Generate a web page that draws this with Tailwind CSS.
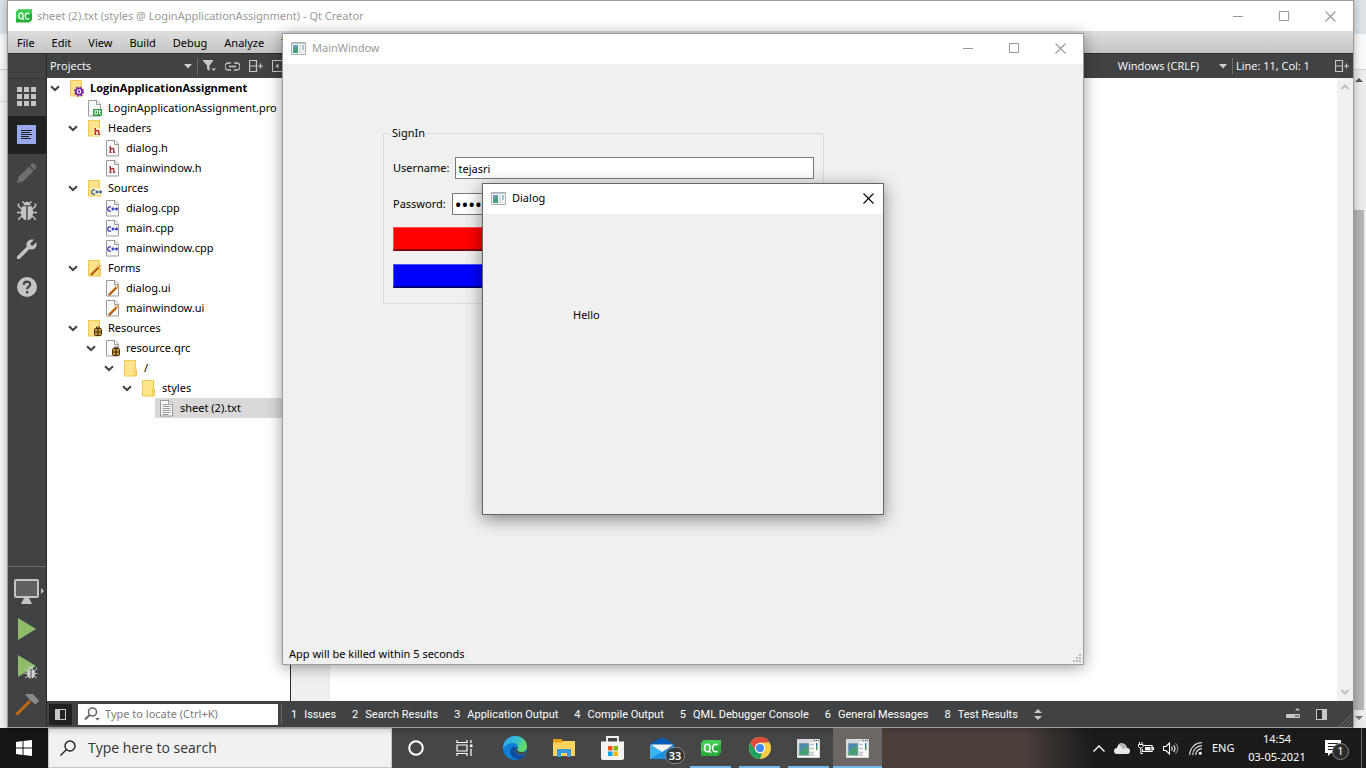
<!DOCTYPE html>
<html lang="en">
<head>
<meta charset="utf-8">
<title>Qt Creator desktop</title>
<script src="https://cdn.jsdelivr.net/npm/@tailwindcss/browser@4"></script>
</head>
<body class="flex h-screen flex-col overflow-hidden bg-[#f1f1f1] font-['Noto_Sans','Open_Sans',sans-serif] text-[11px] leading-4 text-black">

<!-- Shared icon shapes -->
<svg class="hidden" aria-hidden="true">
  <symbol id="qc" viewBox="0 0 20 16"><path d="M3 0h17v13l-3 3H0V3z" fill="#28ad3c"/><path d="M3 0h17v5L0 12V3z" fill="#41cd52"/><path d="M8.800 11.200 10 13M6.300 4.200c-2 0-2.700 1.500-2.700 3.800s.7 3.700 2.700 3.700S9 10.200 9 8s-.7-3.800-2.700-3.800zM16.500 4.800c-3.200-1.400-4.900.3-4.900 3.200s1.700 4.700 4.900 3.300" fill="none" stroke="#fff" stroke-width="1.500"/></symbol>
  <symbol id="down" viewBox="0 0 10 7"><path d="M1 1.200 5 5l4-3.800" fill="none" stroke="#444" stroke-width="2"/></symbol>
  <symbol id="folder" viewBox="0 0 15 17"><path d="M.5.500h11v15.500H.5z" fill="#ffe38b" stroke="#eec84f"/><path d="M10.500 9.500h2V16h-2z" fill="#ffe38b" stroke="#eec84f"/></symbol>
  <symbol id="page" viewBox="0 0 15 17"><path d="M.5.500H9l3.500 3.500v12H.5z" fill="#fafafa" stroke="#9a9a9a"/><path d="M8.500.500V4.500h4" fill="#eee" stroke="#9a9a9a"/></symbol>
  <symbol id="hglyph" viewBox="0 0 7 8"><path d="M1 0v8M1 4q4-2.500 4 .5V8M0 .5h1M0 7.500h2.500M4 7.500h2.500" fill="none" stroke="currentColor" stroke-width="1.600"/></symbol>
  <symbol id="cpp" viewBox="0 0 11 6"><path d="M4 1.200Q.8-.2.800 3T4 4.800M4.500 3h3M6 1.500v3M8 3h3M9.500 1.500v3" fill="none" stroke="currentColor" stroke-width="1.300"/></symbol>
  <symbol id="wand" viewBox="0 0 11 11"><path d="M.8 10.200 8 3" stroke="#b9600c" stroke-width="2.200"/><path d="m7.500 3.500 2.500-2.500M6.500 1.500l.5.500M9.500 4.500l.5.500" stroke="#e0a050" stroke-width="1.400"/></symbol>
  <symbol id="barrel" viewBox="0 0 8 10"><path d="M2.500 2.500V1h3v1.500" fill="none" stroke="#4a2c18"/><rect x=".5" y="2.500" width="7" height="7" rx="1" fill="#c79b2c" stroke="#4a2c18"/><path d="M0 6h8M4 2.500v7" stroke="#4a2c18" stroke-width="1.200"/></symbol>
  <symbol id="bug" viewBox="0 0 20 20"><path d="M6.500 4.300a3.500 3.500 0 0 1 7 0z"/><path d="M9.300 5.200v14C5.500 18.700 4 15.500 4 11c0-2.500.4-4.500 1.500-5.800zM10.700 5.200v14c3.800-.5 5.300-3.700 5.300-8.200 0-2.500-.4-4.500-1.500-5.800z"/><path d="M4.500 8 1.500 5V2.500M15.500 8l3-3V2.500M4.500 11.500H0M15.500 11.500H20M5 15l-3 2.500V19M15 15l3 2.500V19M7 2 5.500.500M13 2l1.500-1.500" fill="none" stroke="currentColor" stroke-width="1.500"/></symbol>
  <symbol id="app" viewBox="0 0 15 13"><path d="M.5.500h14v12H.5z" fill="#f1f3f4" stroke="#a9b0b5"/><path d="M1 1h13v1H1z" fill="#c2c9ce"/><path d="M2 3h5v8H2z" fill="#6c9abf"/><path d="m2 11V8l5-4v7z" fill="#48a178"/><path d="M8 3h2v8H8z" fill="#dde0e2"/><path d="M11 3h2v5h-2z" fill="#a3c6cf"/></symbol>
  <symbol id="appbig" viewBox="0 0 23 19"><path d="M.5.500h22v18H.5z" fill="#fafafa" stroke="#d7dadc"/><path d="M1 1h21v2H1z" fill="#d6d9dc"/><path d="M17 1.500h1M19 1.500h1M21 1.500h1" stroke="#555"/><path d="M2 4h10v12.500H2z" fill="#5287ad" stroke="#a9b6bd"/><path d="M2.500 16c1-5 4-8 9-9v9z" fill="#47a06f"/><path d="M13 5.500h4M13 9.500h4M13 13.500h4M13 16h4" stroke="#bdc1c4" stroke-width="1.600"/><path d="M19 4h1.500v3H19z" fill="#3571b4"/><path d="M19 7h1.500v4H19z" fill="#3b9a68"/></symbol>
  <symbol id="split" viewBox="0 0 15 12"><path d="M.5.500h7v11h-7zM.5 6h7M9 6h5M11.500 3.500v5" fill="none" stroke="#c8c8c8" stroke-width="1.200"/></symbol>
  <symbol id="close" viewBox="0 0 11 11"><path d="m.5.500 10 10m0-10-10 10" stroke="currentColor" stroke-width="1.100"/></symbol>
  <symbol id="lens" viewBox="0 0 16 16"><circle cx="10" cy="6" r="5" fill="none" stroke="currentColor" stroke-width="1.400"/><path d="M6.500 9.500.5 15.500" stroke="currentColor" stroke-width="1.400"/></symbol>
</svg>

<main class="relative min-h-0 flex-1">
  <!-- Browser behind everything -->
  <div class="absolute inset-0 flex flex-col bg-[#f5f5f5]">
    <div class="h-[34px] bg-[#dee3e7]"></div>
    <div class="h-9 border-b border-[#d0d3d7] bg-[#fafafa]"></div>
    <div class="flex min-h-0 flex-1">
      <div class="flex-1"><div class="h-8 border-b border-[#dcdcdc]"></div></div>
      <div class="flex w-4 flex-col items-end bg-[#ececec] pr-[2px]">
        <svg class="mt-2 h-1 w-[9px]" viewBox="0 0 9 4"><path d="M0 4 4 0l4 4z" fill="#555"/></svg>
        <div class="mt-32 w-3 flex-1 bg-[#b5b5b5]"></div>
        <svg class="mt-[6px] mb-2 h-1 w-[9px]" viewBox="0 0 9 4"><path d="M0 0h8L4 4z" fill="#777"/></svg>
      </div>
    </div>
  </div>

  <!-- Qt Creator window -->
  <section class="absolute top-0 right-3 bottom-0 left-[7px] flex flex-col border border-[#9b9b9b] bg-white shadow-[0_0_8px_rgba(0,0,0,0.3)]">
    <header class="flex h-[30px] shrink-0 items-center pl-2 text-[#999]">
      <svg class="mr-1 h-[14px] w-4"><use href="#qc"/></svg>
      <h1 class="flex-1 pl-px">sheet (2).txt (styles @ LoginApplicationAssignment) - Qt Creator</h1>
      <button aria-label="Minimize" class="flex h-full w-[46px] items-center justify-center"><svg class="h-[11px] w-[11px]" viewBox="0 0 11 11"><path d="M0 5.500h10" stroke="#999"/></svg></button>
      <button aria-label="Maximize" class="flex h-full w-[46px] items-center justify-center"><svg class="h-[11px] w-[11px]" viewBox="0 0 11 11"><path d="M.5.500h9v9h-9z" fill="none" stroke="#999"/></svg></button>
      <button aria-label="Close" class="flex h-full w-[46px] items-center justify-center"><svg class="h-[11px] w-[11px]"><use href="#close"/></svg></button>
    </header>
    <nav class="flex h-[22px] shrink-0 items-center gap-[17px] bg-linear-to-b from-[#dedede] to-[#c5c5c5] pt-px pl-[9px]">
      <button>File</button><button>Edit</button><button>View</button><button>Build</button><button>Debug</button><button>Analyze</button><button>Tools</button>
    </nav>

    <div class="flex min-h-0 flex-1 bg-[#404244]">
      <!-- Mode selector -->
      <aside class="flex w-[39px] shrink-0 flex-col border-t border-r border-[#2b2c2d] pt-6 text-[#c3c4c5]">
        <button aria-label="Welcome" class="flex h-[38px] items-center justify-center border-t border-[#333536] pr-[2px] pb-[2px]"><svg class="h-[19px] w-[19px]" viewBox="0 0 19 19" fill="#c3c4c5"><path d="M0 0h5v5H0zM7 0h5v5H7zM14 0h5v5h-5zM0 7h5v5H0zM7 7h5v5H7zM14 7h5v5h-5zM0 14h5v5H0zM7 14h5v5H7zM14 14h5v5h-5z"/></svg></button>
        <button aria-label="Edit" class="flex h-[38px] items-center justify-center bg-[#202222] pr-[2px] pb-[2px]"><svg class="h-[19px] w-[19px]" viewBox="0 0 19 19"><path d="M0 0h19v19H0z" fill="#97a8ed"/><path d="M4 5.500h11M4 7.500h9M4 9.500h11M4 11.500h8M4 13.500h10" stroke="#202222"/></svg></button>
        <button aria-label="Design" class="flex h-[38px] items-center justify-center pr-px"><svg class="h-5 w-5" viewBox="0 0 20 20" fill="#6d6e6f"><path d="m0 20 1.500-6L12 3.500 16.500 8 6 18.500zM13 2.500 15 .5Q16 0 17 1l2 2q1 1 .3 2l-2 2z"/></svg></button>
        <button aria-label="Debug" class="flex h-[38px] items-center justify-center pr-px"><svg class="h-5 w-5" fill="currentColor"><use href="#bug"/></svg></button>
        <button aria-label="Projects" class="flex h-[38px] items-center justify-center pr-px"><svg class="h-5 w-5" viewBox="0 0 20 20"><path d="M1.500 18.500 11 9" stroke="#c3c4c5" stroke-width="3.600" stroke-linecap="round"/><path d="M17 .8 13.500 4.300l.4 2 2 .4L19.300 3.200c1.500 4.500-2.300 8.300-6.500 7L9.700 7.200C8.500 3 12.500-.7 17 .8z" fill="#c3c4c5"/></svg></button>
        <button aria-label="Help" class="flex h-[38px] items-center justify-center"><svg class="h-5 w-5" viewBox="0 0 20 20"><circle cx="10" cy="10" r="10" fill="#c3c4c5"/><path d="M6.800 7.800c0-4.300 6.600-4 6.400-.3-.1 2.200-3 2.200-3.100 4.700" fill="none" stroke="#404244" stroke-width="2.200"/><path d="M9 14h2.300v2.300H9z" fill="#404244"/></svg></button>
        <div class="flex-1"></div>
        <div class="border-t border-[#696a6b] pt-[6px] pb-[3px]">
          <button aria-label="Kit selector" class="flex h-[37px] w-full items-center justify-center pl-1"><svg class="h-[25px] w-[30px]" viewBox="0 0 30 25"><rect x="1" y="1" width="23" height="17" rx="1" fill="#606162" stroke="#c3c4c5" stroke-width="2"/><path d="M10 19h5l3 6H7z" fill="#c3c4c5"/><path d="m27 9 3 3-3 3z" fill="#c3c4c5"/></svg></button>
          <button aria-label="Run" class="flex h-[38px] w-full items-center justify-center"><svg class="h-[22px] w-[18px]" viewBox="0 0 18 22"><path d="m0 0 18 11L0 22z" fill="#8fbc6b"/></svg></button>
          <button aria-label="Start debugging" class="flex h-[38px] w-full items-center justify-center pl-px"><svg class="h-6 w-5" viewBox="0 0 20 24"><path d="m0 0 18 11L0 22z" fill="#8fbc6b"/><svg x="6" y="11" width="14" height="13" viewBox="0 0 20 20" fill="#d0d1d2" color="#d0d1d2"><use href="#bug"/></svg></svg></button>
          <button aria-label="Build" class="flex h-[38px] w-full items-center justify-center"><svg class="h-[22px] w-6" viewBox="0 0 24 22"><path d="M1.500 20.500 15 7" stroke="#c06a14" stroke-width="3"/><path d="M10 0h8l6 7-3.500 3.500-5.500-4.500z" fill="#888a8c"/></svg></button>
        </div>
      </aside>

      <div class="flex min-w-0 flex-1 flex-col">
        <div class="flex min-h-0 flex-1">
          <!-- Project tree -->
          <section class="flex w-[244px] shrink-0 flex-col border-r border-[#2b2c2d] bg-white">
            <div class="flex h-[25px] shrink-0 items-center border-t border-[#2b2c2d] bg-[#404244] pr-[7px] font-['Open_Sans','Noto_Sans',sans-serif] text-white">
              <button class="flex flex-1 items-center justify-between pr-[5px] pl-[3px]"><span>Projects</span><svg class="h-[5px] w-2" viewBox="0 0 8 5"><path d="M0 0h8L4 4.500z" fill="#d0d0d0"/></svg></button>
              <div class="h-4 w-px bg-[#6a6b6c]"></div>
              <button aria-label="Filter tree" class="ml-[5px]"><svg class="h-3 w-[13px]" viewBox="0 0 13 12"><path d="M0 0h10v1L6.500 5.500V11L4 9V5.500L0 1zM8.500 8.500H13L10.800 11z" fill="#c8c8c8"/></svg></button>
              <button aria-label="Synchronize" class="ml-[9px]"><svg class="h-[9px] w-[15px]" viewBox="0 0 15 9"><path d="M6 1H3.500a3 3 0 0 0 0 7H6M9 1h2.500a3 3 0 0 1 0 7H9M4 4.500h7" fill="none" stroke="#c8c8c8" stroke-width="1.300"/></svg></button>
              <button aria-label="Split" class="ml-[9px]"><svg class="h-3 w-[15px]"><use href="#split"/></svg></button>
              <button aria-label="Close pane" class="ml-2"><svg class="h-3 w-[11px]" viewBox="0 0 11 12"><path d="M.5.500h10v11H.5z" fill="none" stroke="#c8c8c8"/><path d="M6.500 3.500v5L3.500 6z" fill="#c8c8c8"/></svg></button>
            </div>
            <ul class="[&_svg]:shrink-0 [&>li]:flex [&>li]:h-5 [&>li]:items-center [&>li]:whitespace-nowrap">
              <li class="pl-[3px] font-['Open_Sans','Noto_Sans',sans-serif] font-bold"><svg class="h-[7px] w-5"><use href="#down" width="10"/></svg>
                <svg class="mr-1 h-[17px] w-4" viewBox="0 0 16 17"><use href="#folder" width="15" height="17"/><circle cx="9" cy="11.500" r="3.200" fill="#fff" stroke="#7a28a8" stroke-width="1.800"/><circle cx="9" cy="11.500" r="4.500" fill="none" stroke="#7a28a8" stroke-width="1.300" stroke-dasharray="1.800 1.734"/><circle cx="9" cy="11.500" r="1.200" fill="#7a28a8"/></svg>LoginApplicationAssignment</li>
              <li class="pl-[41px]"><svg class="mr-1 h-[17px] w-4" viewBox="0 0 16 17"><use href="#page" width="15" height="17"/><rect x="5" y="9" width="9" height="7" rx="1" fill="#28a13a"/><path d="M7 10.500h2.500V14H7zM11.500 10v4h1.500M10.500 11.500H13" fill="none" stroke="#fff"/></svg>LoginApplicationAssignment.pro</li>
              <li class="pl-[21px]"><svg class="h-[7px] w-5"><use href="#down" width="10"/></svg>
                <svg class="mr-1 h-[17px] w-4" viewBox="0 0 16 17"><use href="#folder" width="15" height="17"/><path d="M6 8h7v8H6z" fill="#fff4cc"/><use href="#hglyph" x="6" y="8" width="7" height="7" color="#d02020"/></svg>Headers</li>
              <li class="pl-[59px]"><svg class="mr-1 h-[17px] w-4" viewBox="0 0 16 17"><use href="#page" width="15" height="17"/><use href="#hglyph" x="3" y="6" width="7" height="7" color="#b03038"/></svg>dialog.h</li>
              <li class="pl-[59px]"><svg class="mr-1 h-[17px] w-4" viewBox="0 0 16 17"><use href="#page" width="15" height="17"/><use href="#hglyph" x="3" y="6" width="7" height="7" color="#b03038"/></svg>mainwindow.h</li>
              <li class="pl-[21px]"><svg class="h-[7px] w-5"><use href="#down" width="10"/></svg>
                <svg class="mr-1 h-[17px] w-4" viewBox="0 0 16 17"><use href="#folder" width="15" height="17"/><path d="M3 8h10v7H3z" fill="#fff4cc"/><use href="#cpp" x="3" y="9" width="11" height="6" color="#2e5c88"/></svg>Sources</li>
              <li class="pl-[59px]"><svg class="mr-1 h-[17px] w-4" viewBox="0 0 16 17"><use href="#page" width="15" height="17"/><use href="#cpp" x="1" y="6" width="11" height="6" color="#3434b4"/></svg>dialog.cpp</li>
              <li class="pl-[59px]"><svg class="mr-1 h-[17px] w-4" viewBox="0 0 16 17"><use href="#page" width="15" height="17"/><use href="#cpp" x="1" y="6" width="11" height="6" color="#3434b4"/></svg>main.cpp</li>
              <li class="pl-[59px]"><svg class="mr-1 h-[17px] w-4" viewBox="0 0 16 17"><use href="#page" width="15" height="17"/><use href="#cpp" x="1" y="6" width="11" height="6" color="#3434b4"/></svg>mainwindow.cpp</li>
              <li class="pl-[21px]"><svg class="h-[7px] w-5"><use href="#down" width="10"/></svg>
                <svg class="mr-1 h-[17px] w-4" viewBox="0 0 16 17"><use href="#folder" width="15" height="17"/><use href="#wand" x="2" y="4" width="12" height="12"/></svg>Forms</li>
              <li class="pl-[59px]"><svg class="mr-1 h-[17px] w-4" viewBox="0 0 16 17"><use href="#page" width="15" height="17"/><use href="#wand" x="2" y="4" width="12" height="12"/></svg>dialog.ui</li>
              <li class="pl-[59px]"><svg class="mr-1 h-[17px] w-4" viewBox="0 0 16 17"><use href="#page" width="15" height="17"/><use href="#wand" x="2" y="4" width="12" height="12"/></svg>mainwindow.ui</li>
              <li class="pl-[21px]"><svg class="h-[7px] w-5"><use href="#down" width="10"/></svg>
                <svg class="mr-1 h-[17px] w-4" viewBox="0 0 16 17"><use href="#folder" width="15" height="17"/><use href="#barrel" x="6" y="6" width="8" height="10"/></svg>Resources</li>
              <li class="pl-[39px]"><svg class="h-[7px] w-5"><use href="#down" width="10"/></svg>
                <svg class="mr-1 h-[17px] w-4" viewBox="0 0 16 17"><use href="#page" width="15" height="17"/><use href="#barrel" x="6" y="6" width="8" height="10"/></svg>resource.qrc</li>
              <li class="pl-[57px]"><svg class="h-[7px] w-5"><use href="#down" width="10"/></svg>
                <svg class="mr-1 h-[17px] w-4" viewBox="0 0 16 17"><use href="#folder" width="15" height="17"/></svg>/</li>
              <li class="pl-[75px]"><svg class="h-[7px] w-5"><use href="#down" width="10"/></svg>
                <svg class="mr-1 h-[17px] w-4" viewBox="0 0 16 17"><use href="#folder" width="15" height="17"/></svg>styles</li>
              <li class="ml-[108px] bg-[#d9d9d9] pl-[5px]"><svg class="mr-1 h-[17px] w-4" viewBox="0 0 16 17"><use href="#page" width="15" height="17"/><path d="M2.500 4.500h5M2.500 6.500h8M2.500 8.500h8M2.500 10.500h8M2.500 12.500h8M2.500 14.500h6" stroke="#999"/></svg>sheet (2).txt</li>
            </ul>
          </section>
          <!-- Editor -->
          <section class="flex min-w-0 flex-1 flex-col bg-white">
            <div class="flex h-[25px] shrink-0 items-center justify-end border-t border-[#2b2c2d] bg-[#404244] pr-[3px] font-['Open_Sans','Noto_Sans',sans-serif] text-white">
              <button class="flex items-center gap-5 pr-[5px]"><span>Windows (CRLF)</span><svg class="h-[5px] w-2" viewBox="0 0 8 5"><path d="M0 0h8L4 4.500z" fill="#d0d0d0"/></svg></button>
              <div class="h-4 w-px bg-[#6a6b6c]"></div>
              <span class="w-[102px] pl-[3px]">Line: 11, Col: 1</span>
              <button aria-label="Split editor"><svg class="h-3 w-[15px]"><use href="#split"/></svg></button>
            </div>
            <div class="flex flex-1 justify-between">
              <div class="w-[39px] bg-[#efefef]"></div>
              <div class="flex w-4 flex-col items-center justify-between bg-[#f0f0f0] py-[6px]">
                <svg class="h-[6px] w-2" viewBox="0 0 8 6"><path d="m.5 5 3.500-3.500L7.500 5" fill="none" stroke="#bfbfbf" stroke-width="2"/></svg>
                <svg class="h-[6px] w-2" viewBox="0 0 8 6"><path d="M.5 1 4 4.500 7.500 1" fill="none" stroke="#bfbfbf" stroke-width="2"/></svg>
              </div>
            </div>
          </section>
        </div>
        <!-- Output bar -->
        <footer class="flex h-[26px] shrink-0 items-center pl-[2px] text-white">
          <button aria-label="Toggle sidebar" class="flex h-[21px] w-[23px] items-center justify-center bg-[#202222]"><svg class="h-[11px] w-[11px]" viewBox="0 0 11 11"><path d="M0 0h11v11H0z" fill="#c8c8c8"/><path d="M5 1h5v9H5z" fill="#202222"/></svg></button>
          <label class="ml-[6px] flex h-[21px] w-[200px] items-center bg-white pl-[6px] text-[#7c7c7c]">
            <svg class="mr-[5px] h-[15px] w-4" viewBox="0 0 16 15"><circle cx="8.500" cy="5" r="4" fill="none" stroke="#666" stroke-width="1.600"/><path d="M5.500 8 1 12.500" stroke="#666" stroke-width="2"/><path d="M11 11h5l-2.500 2.500z" fill="#666"/></svg>
            <input aria-label="Locator" placeholder="Type to locate (Ctrl+K)" class="w-40 outline-none placeholder:text-[#7c7c7c]">
          </label>
          <div class="mx-[3px] h-5 w-px bg-[#6a6b6c]"></div>
          <div class="flex gap-4 pt-[2px] pl-[6px] font-[Roboto,sans-serif] whitespace-nowrap [&>button]:flex [&>button]:gap-[7px]">
            <button><span>1</span>Issues</button><button><span>2</span>Search Results</button><button><span>3</span>Application Output</button><button><span>4</span>Compile Output</button><button><span>5</span>QML Debugger Console</button><button><span>6</span>General Messages</button><button><span>8</span>Test Results</button>
          </div>
          <button aria-label="Output panes" class="ml-4"><svg class="h-[11px] w-2" viewBox="0 0 8 11"><path d="M0 4h8L4 0zM0 7h8l-4 4z" fill="#c8c8c8"/></svg></button>
          <div class="flex-1"></div>
          <button aria-label="Progress details" class="mr-4"><svg class="h-3 w-[14px]" viewBox="0 0 14 12"><path d="M9 2.500h5L11.500 0z" fill="#c8c8c8"/><path d="M.5 6.500h13v3H.5z" fill="#c8c8c8" stroke="#c8c8c8"/><path d="M9 7.500h4v1H9z" fill="#333"/></svg></button>
          <button aria-label="Toggle right sidebar" class="mr-[7px]"><svg class="h-[11px] w-[11px]" viewBox="0 0 11 11"><path d="M0 0h11v11H0z" fill="#c8c8c8"/><path d="M1 1h5v9H1z" fill="#303132"/></svg></button>
          <svg class="mr-px h-[13px] w-[18px] self-end" viewBox="0 0 18 13"><path d="M5 13 18 0M9 13l9-9M13 13l5-5" stroke="#686a6b"/></svg>
        </footer>
      </div>
    </div>
  </section>

  <!-- MainWindow -->
  <section class="absolute top-[33px] left-[282px] flex h-[632px] w-[802px] flex-col border border-[#9b9b9b] bg-[#f0f0f0] shadow-[0_2px_14px_rgba(0,0,0,0.4)]">
    <header class="flex h-[30px] shrink-0 items-center bg-white pb-[2px] pl-2 text-[#999]">
      <svg class="mr-[6px] h-[13px] w-[15px]"><use href="#app"/></svg>
      <h2 class="flex-1">MainWindow</h2>
      <button aria-label="Minimize" class="flex h-full w-[46px] items-center justify-center"><svg class="h-[11px] w-[11px]" viewBox="0 0 11 11"><path d="M0 5.500h10" stroke="#999"/></svg></button>
      <button aria-label="Maximize" class="flex h-full w-[46px] items-center justify-center"><svg class="h-[11px] w-[11px]" viewBox="0 0 11 11"><path d="M.5.500h9v9h-9z" fill="none" stroke="#999"/></svg></button>
      <button aria-label="Close" class="flex h-full w-[46px] items-center justify-center"><svg class="h-[11px] w-[11px]"><use href="#close"/></svg></button>
    </header>
    <form class="flex-1 pt-[61px] pl-[100px]">
      <fieldset class="flex w-[441px] flex-col border border-[#dcdcdc] px-[9px] pb-[15px]">
        <legend class="-ml-[3px] px-[2px]">SignIn</legend>
        <div class="mt-4 flex items-center gap-[6px]"><label for="user">Username:</label><input id="user" value="tejasri" class="h-[22px] min-w-0 flex-1 border border-[#7a7a7a] bg-white px-[2px]"></div>
        <div class="mt-[14px] flex items-center gap-[6px]"><label for="pass">Password:</label><input id="pass" type="password" value="tejasri1" class="h-[22px] min-w-0 flex-1 border border-[#7a7a7a] bg-white px-[2px] text-[18px]"></div>
        <button type="button" aria-label="Sign in" class="mt-3 h-6 border border-t-[#ff5050] border-r-[#7a0000] border-b-2 border-b-[#7a0000] border-l-[#ff5050] bg-[#ff0000]"></button>
        <button type="button" aria-label="Cancel" class="mt-[13px] h-6 border border-t-[#5050ff] border-r-[#00007a] border-b-2 border-b-[#00007a] border-l-[#5050ff] bg-[#0000ff]"></button>
      </fieldset>
    </form>
    <footer class="flex items-end justify-between pr-[2px] pb-[2px] pl-[6px]"><span>App will be killed within 5 seconds</span>
      <svg class="h-2 w-2" viewBox="0 0 8 8" fill="#b8b8b8"><path d="M6 0h2v2H6zM3 3h2v2H3zM6 3h2v2H6zM0 6h2v2H0zM3 6h2v2H3zM6 6h2v2H6z"/></svg></footer>
  </section>

  <!-- Dialog -->
  <section role="dialog" aria-label="Dialog" class="absolute top-[183px] left-[482px] flex h-[332px] w-[402px] flex-col border border-[#666] bg-[#f0f0f0] shadow-[0_4px_16px_rgba(0,0,0,0.45)]">
    <header class="flex h-[30px] shrink-0 items-center bg-white pb-[2px] pl-2">
      <svg class="mr-[6px] h-[13px] w-[15px]"><use href="#app"/></svg>
      <h2 class="flex-1">Dialog</h2>
      <button aria-label="Close" class="flex h-full w-[30px] items-center justify-center"><svg class="h-[11px] w-[11px]"><use href="#close"/></svg></button>
    </header>
    <p class="pt-[93px] pl-[90px]">Hello</p>
  </section>
</main>

<!-- Taskbar -->
<footer class="flex h-10 shrink-0 bg-linear-to-r from-[#4a3f3b] from-75% to-[#1b1b1b] to-80% text-white">
  <button aria-label="Start" class="flex w-12 items-center justify-center bg-[#161616]"><svg class="h-4 w-4" viewBox="0 0 16 16" fill="#fff"><path d="m0 2 6.500-1v6.500H0zM7.500.900 16 0v7.500H7.500zM0 8.500h6.500V15L0 14zM7.500 8.500H16V16l-8.500-1z"/></svg></button>
  <label class="flex w-[344px] items-center border border-[#c6c6c6] bg-[#f1f1f1] pl-[11px] text-[#222]">
    <svg class="mr-3 h-4 w-4"><use href="#lens"/></svg>
    <input aria-label="Search" placeholder="Type here to search" class="w-72 font-['Open_Sans','Noto_Sans',sans-serif] text-[14px] leading-5 outline-none placeholder:text-[#333]">
  </label>
  <div class="flex bg-[#464646] [&>button]:relative [&>button]:flex [&>button]:w-[49px] [&>button]:items-center [&>button]:justify-center">
    <button aria-label="Cortana" class="pr-[2px]"><svg class="h-4 w-4" viewBox="0 0 16 16"><circle cx="8" cy="8" r="6.800" fill="none" stroke="#fff" stroke-width="2"/></svg></button>
    <button aria-label="Task view" class="pr-[2px]"><svg class="h-4 w-[17px]" viewBox="0 0 17 16" fill="none" stroke="#fff" stroke-width="1.200"><path d="M1 0v2.500h10V0M1 5h10v6H1zM1 16v-2.500h10V16M15 0v3M15 8.500V16"/><path d="M14 4.500h2.500V7H14z" fill="#fff" stroke="none"/></svg></button>
    <button aria-label="Edge"><svg class="h-6 w-6" viewBox="0 0 24 24"><defs><linearGradient id="eg" x1="0" x2="1" y1="0" y2=".4"><stop offset=".2" stop-color="#34a9e4"/><stop offset=".6" stop-color="#35c1cf"/><stop offset="1" stop-color="#65dc62"/></linearGradient></defs><circle cx="12" cy="12" r="12" fill="#0f7fd6"/><path d="M.2 10C2 3 7-.2 12.500 0 20 .3 24 5.500 24 10.500c0 3.500-2.700 5.500-6 5.500-2.800 0-4.500-1-3.500-2.700C16 10 14 7 10 7 5 7 1.500 10 .2 13z" fill="url(#eg)"/><path d="M8.500 12c-3.500 5 1 11.500 7 11.400 3-.6 5.500-2.500 7-5-5 2.500-11.500 0-10-6 .4-1.300-2.500-3-4-.4z" fill="#0c4c9c"/><path d="M14 10.500c1 1.500-.5 2.500.4 4 1 1.300 3 1.500 4.600 1.500l3.800-.5-1 2.500c-5 2.300-10.500-.5-9-6z" fill="#464646"/></svg></button>
    <button aria-label="File Explorer"><svg class="h-5 w-[22px]" viewBox="0 0 22 20"><path d="M0 1h8l2 2h11v5H0z" fill="#e5a00d"/><path d="M0 4.500h9L10.500 3H22v15H0z" fill="#ffd35c"/><path d="M4 19v-8h14v8h-4v-4H8v4z" fill="#3a99dd"/></svg></button>
    <button aria-label="Store"><svg class="h-6 w-[23px]" viewBox="0 0 23 24"><path d="M6 6V1h11v5" fill="none" stroke="#f2f2f2" stroke-width="1.800"/><path d="M0 5.500h23V22q0 2-2 2H2q-2 0-2-2z" fill="#f4f4f4"/><path d="M7 10h4.500v4.500H7z" fill="#f25022"/><path d="M12.500 10H17v4.500h-4.500z" fill="#7fba00"/><path d="M7 15.500h4.500V20H7z" fill="#00a4ef"/><path d="M12.500 15.500H17V20h-4.500z" fill="#ffb900"/></svg></button>
    <button aria-label="Mail, 33 unread"><svg class="h-[23px] w-6" viewBox="0 0 24 23"><path d="M0 7 12 0l12 7v5H0z" fill="#0a5bb5"/><path d="M1 7.500h22L12 17z" fill="#f6f6f6"/><path d="m0 7.500 12 7.500 12-7.500V22H0z" fill="#1b8fe0"/><path d="m0 7.500 12 7.500L0 22z" fill="#3cb4f2"/></svg><span class="absolute top-[19px] left-7 flex h-[17px] w-5 items-center justify-center rounded-full border border-[#8a8a8a] bg-[#303030]/85 text-[11px] font-semibold">33</span></button>
    <button aria-label="Qt Creator" class="after:absolute after:inset-x-1 after:bottom-0 after:h-[2px] after:bg-[#76b9ed]"><svg class="h-4 w-5"><use href="#qc"/></svg></button>
    <button aria-label="Chrome" class="after:absolute after:inset-x-1 after:bottom-0 after:h-[2px] after:bg-[#76b9ed]"><svg class="h-[22px] w-[22px]" viewBox="0 0 22 22"><circle cx="11" cy="11" r="11" fill="#f9cf47"/><path d="M1.500 5.500A11 11 0 0 1 20.500 5.500H11L6.200 13.800z" fill="#dc4b3e"/><path d="M1.500 5.500 6.200 13.800Q8 16 11 16.500l2-.3L11 22A11 11 0 0 1 1.500 5.500z" fill="#1fa363"/><circle cx="11" cy="11" r="5.200" fill="#fff"/><circle cx="11" cy="11" r="4.100" fill="#4688f1"/></svg></button>
    <button aria-label="MainWindow" class="after:absolute after:inset-x-1 after:bottom-0 after:h-[2px] after:bg-[#76b9ed]"><svg class="h-[19px] w-[23px]"><use href="#appbig"/></svg></button>
    <button aria-label="Dialog" class="bg-[#6c6765] after:absolute after:inset-x-0 after:bottom-0 after:h-[2px] after:bg-[#76b9ed]"><svg class="h-[19px] w-[23px]"><use href="#appbig"/></svg></button>
  </div>
  <div class="flex-1"></div>
  <div class="flex items-center pr-1 text-xs">
    <svg class="mr-[9px] h-[7px] w-3" viewBox="0 0 12 7"><path d="m.5 6.500 5.500-5.500 5.500 5.500" fill="none" stroke="#fff" stroke-width="1.400"/></svg>
    <svg class="mr-2 h-[11px] w-4" viewBox="0 0 16 11"><path d="M3 11a3 3 0 0 1 0-6Q4 0 8 .3T13 5a3 3 0 0 1 0 6z" fill="#e8e8e8"/><path d="M5 1.500Q8-1 11 2l2 3-4 1z" fill="#b5b5b5"/></svg>
    <svg class="mr-[9px] h-[13px] w-4" viewBox="0 0 16 13"><path d="M5.500 3.500H14v6H4.500V7M14 5.500h1.500v2H14" fill="none" stroke="#fff" stroke-width="1.200"/><path d="M7 5h5.500v3.500H7z" fill="#fff"/><path d="M1.500 0v2.500M4 0v2.500M.5 2.500H5v2L3.500 6H2L.5 4.500zM2.800 6v5.500H5" fill="none" stroke="#fff"/></svg>
    <svg class="mr-[10px] h-[13px] w-4" viewBox="0 0 16 13" fill="none" stroke="#fff" stroke-width="1.100"><path d="M.5 4.500H3L6.500 1v11L3 8.500H.5zM8.500 4.500q1.500 2 0 4M10.500 3q3 3.500 0 7"/><path d="M12.500 1.200q4.500 5.300 0 10.600" stroke="#888"/></svg>
    <svg class="mr-[10px] h-[13px] w-[13px]" viewBox="0 0 13 13" fill="none" stroke="#ddd" stroke-width="1.200"><path d="M.7 13A12.300 12.300 0 0 1 13 .7M3.700 13A9.300 9.300 0 0 1 13 3.700M6.700 13A6.300 6.300 0 0 1 13 6.700"/><circle cx="11.300" cy="11.300" r="1.500" fill="#fff" stroke="none"/></svg>
    <span class="w-6 text-[11px]">ENG</span>
    <div class="w-[82px] text-center text-[11px] leading-[18px]"><div>14:54</div><div>03-05-2021</div></div>
    <button aria-label="1 new notification" class="relative ml-[7px] h-6 w-[25px]"><svg class="h-4 w-4" viewBox="0 0 16 16"><path d="M0 0h16v13H6l-3 3v-3H0z" fill="#fff"/><path d="M3 3.500h10M3 6.500h10M3 9.500h7" stroke="#222"/></svg><span class="absolute top-[7px] left-[7px] flex h-[17px] w-[17px] items-center justify-center rounded-full border border-[#888] bg-[#2c2c2c] text-[11px]">1</span></button>
    <div class="ml-[11px] h-10 w-px bg-[#666]"></div>
  </div>
</footer>
</body>
</html>
